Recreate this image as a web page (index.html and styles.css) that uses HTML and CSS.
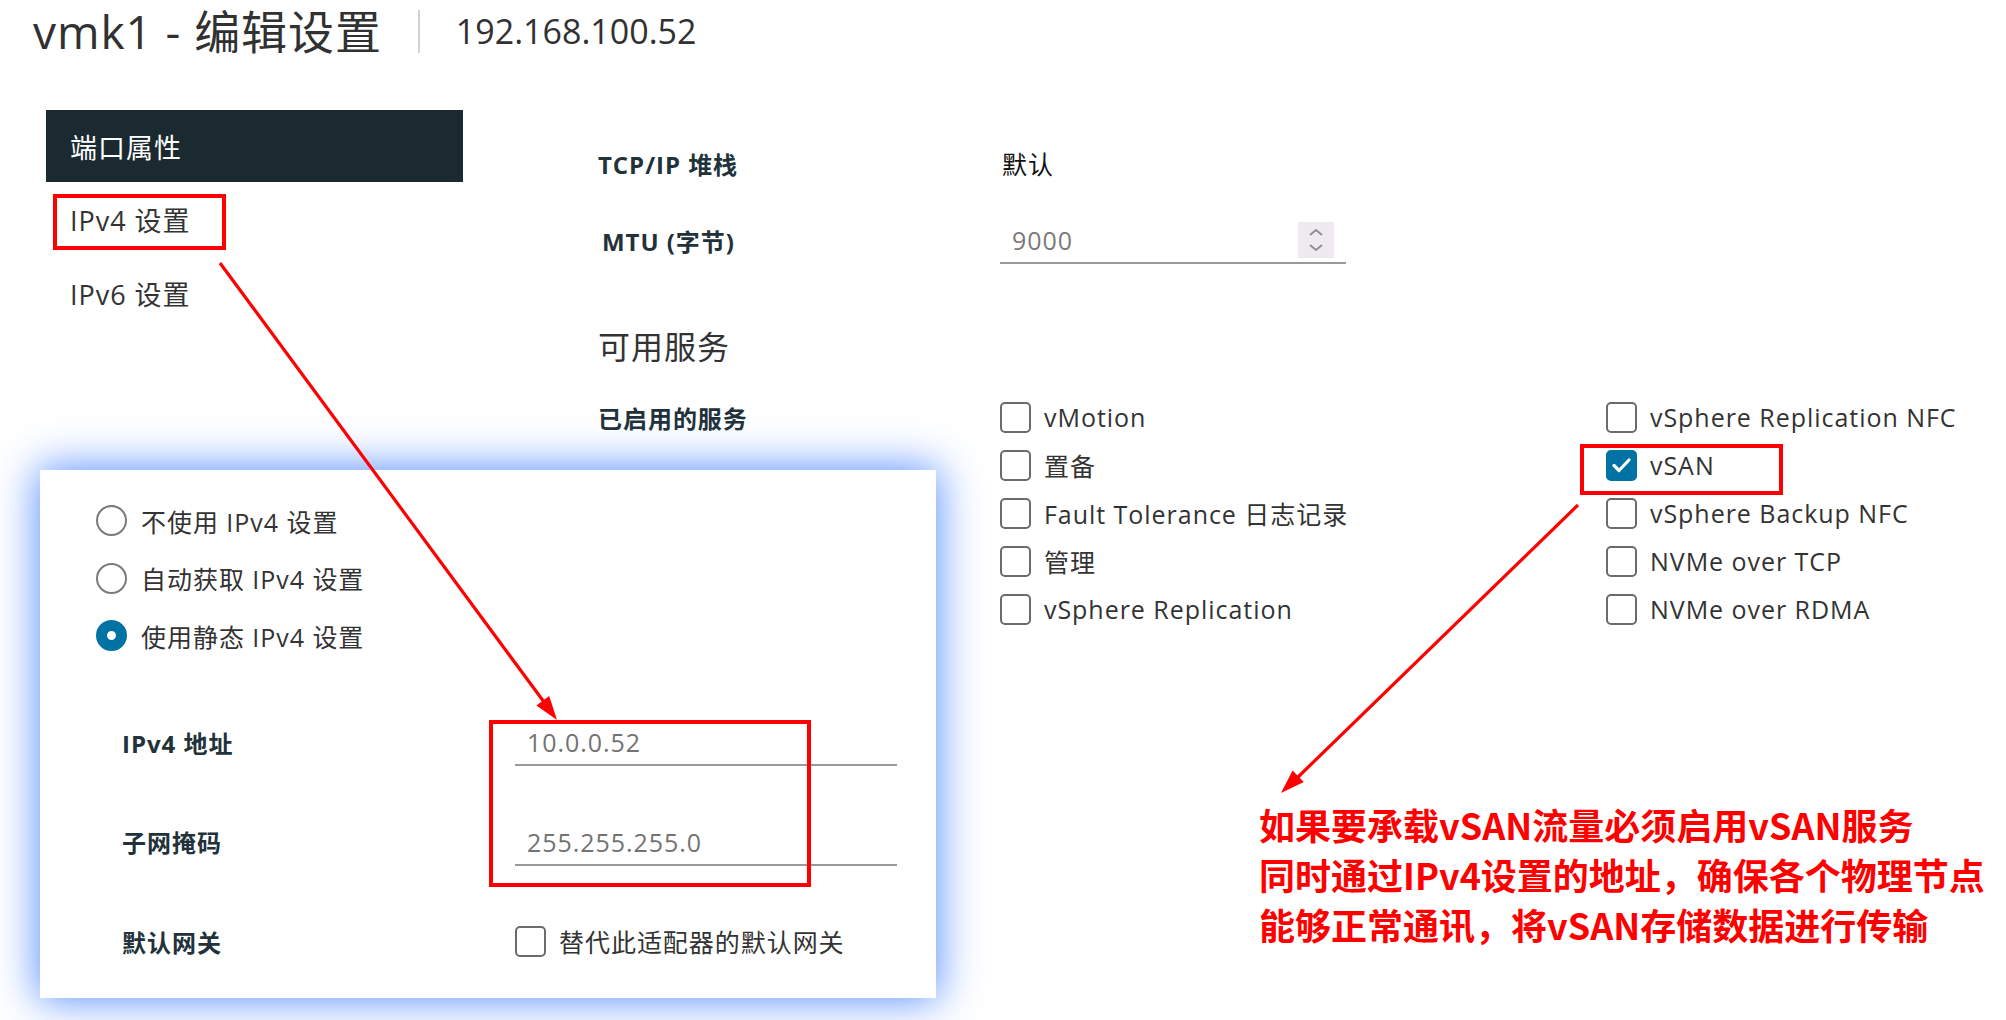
FILE: index.html
```html
<!DOCTYPE html>
<html lang="zh-CN">
<head>
<meta charset="utf-8">
<title>vmk1 - 编辑设置</title>
<link rel="stylesheet" href="styles.css">
</head>
<body>
<div class="page">
  <header class="top">
    <h1 class="title">vmk1 - 编辑设置</h1>
    <span class="sep"></span>
    <span class="ip">192.168.100.52</span>
  </header>

  <div class="main">
    <nav class="nav">
      <div class="nav-head">端口属性</div>
      <div class="nav-item">IPv4 设置</div>
      <div class="nav-item">IPv6 设置</div>
    </nav>

    <section class="form">
      <div class="row row-stack">
        <div class="lbl">TCP/IP 堆栈</div>
        <div class="val">默认</div>
      </div>
      <div class="row row-mtu">
        <div class="lbl lbl-mtu">MTU (字节)</div>
        <div class="num-input">
          <span class="num-val">9000</span>
          <span class="spin">
            <svg width="36" height="36" viewBox="0 0 36 36"><polyline points="12,13 18,8 24,13" fill="none" stroke="#8d8d9c" stroke-width="2"/><polyline points="12,23 18,28 24,23" fill="none" stroke="#8d8d9c" stroke-width="2"/></svg>
          </span>
        </div>
      </div>
      <div class="avail">可用服务</div>
      <div class="services">
        <div class="lbl">已启用的服务</div>
        <div class="check"><span class="box"></span>vMotion</div>
        <div class="check"><span class="box"></span>vSphere Replication NFC</div>

        <div></div>
        <div class="check"><span class="box"></span>置备</div>
        <div class="check"><span class="box checked"><svg width="31" height="31" viewBox="0 0 31 31"><polyline points="8,15.5 13,20.5 23,10" fill="none" stroke="#fff" stroke-width="3.2" stroke-linecap="round" stroke-linejoin="round"/></svg></span>vSAN</div>

        <div></div>
        <div class="check"><span class="box"></span>Fault Tolerance 日志记录</div>
        <div class="check"><span class="box"></span>vSphere Backup NFC</div>

        <div></div>
        <div class="check"><span class="box"></span>管理</div>
        <div class="check"><span class="box"></span>NVMe over TCP</div>

        <div></div>
        <div class="check"><span class="box"></span>vSphere Replication</div>
        <div class="check"><span class="box"></span>NVMe over RDMA</div>
      </div>
    </section>
  </div>

  <div class="callout">
    <div class="radio-row"><span class="radio"></span>不使用 IPv4 设置</div>
    <div class="radio-row"><span class="radio"></span>自动获取 IPv4 设置</div>
    <div class="radio-row"><span class="radio on"></span>使用静态 IPv4 设置</div>
    <div class="fields">
      <div class="field">
        <div class="lbl">IPv4 地址</div>
        <div class="text-input">10.0.0.52</div>
      </div>
      <div class="field">
        <div class="lbl">子网掩码</div>
        <div class="text-input">255.255.255.0</div>
      </div>
      <div class="field">
        <div class="lbl">默认网关</div>
        <div class="check"><span class="box"></span>替代此适配器的默认网关</div>
      </div>
    </div>
  </div>

  <svg class="annot" width="2006" height="1020" viewBox="0 0 2006 1020">
    <rect x="55" y="196" width="169" height="52" fill="none" stroke="#ff0000" stroke-width="4"/>
    <rect x="1582" y="446" width="199" height="47" fill="none" stroke="#ff0000" stroke-width="4"/>
    <rect x="491" y="722" width="318" height="163" fill="none" stroke="#ff0000" stroke-width="4"/>
    <line x1="220" y1="263" x2="544" y2="702" stroke="#ff0000" stroke-width="3.2"/>
    <polygon points="557,720 536.4,705.4 549.2,696" fill="#ff0000"/>
    <line x1="1578" y1="505" x2="1297" y2="778" stroke="#ff0000" stroke-width="3.2"/>
    <polygon points="1281,793 1292.6,770.6 1303.8,782" fill="#ff0000"/>
  </svg>

  <div class="note">如果要承载vSAN流量必须启用vSAN服务<br>同时通过IPv4设置的地址，确保各个物理节点<br>能够正常通讯，将vSAN存储数据进行传输</div>
</div>
</body>
</html>
```

FILE: styles.css
```css
html, body {
  margin: 0;
  padding: 0;
  background: #ffffff;
}

.page {
  position: relative;
  width: 2006px;
  height: 1020px;
  overflow: hidden;
  background: #ffffff;
  font-family: "Open Sans", "Noto Sans CJK SC", sans-serif;
  color: #333333;
  letter-spacing: 0.06em;
}

/* header */
.top {
  display: flex;
  align-items: center;
  height: 56px;
  padding-top: 3px;
  padding-left: 33px;
}

.title {
  margin: 0;
  font-size: 46px;
  font-weight: 400;
  line-height: 46px;
  color: #313131;
  letter-spacing: 0.02em;
}

.sep {
  width: 2px;
  height: 43px;
  background: #d3d3d3;
  margin: 0 36px;
}

.ip {
  font-size: 34px;
  line-height: 40px;
  color: #313131;
  letter-spacing: 0;
}

/* main */
.main {
  display: flex;
  margin-top: 51px;
}

.nav {
  width: 417px;
  margin-left: 46px;
  flex: none;
}

.nav-head {
  height: 72px;
  background: #1b2a31;
  color: #ffffff;
  font-size: 27px;
  display: flex;
  align-items: center;
  padding-left: 24px;
}

.nav-item {
  height: 74px;
  display: flex;
  align-items: center;
  padding-left: 24px;
  font-size: 27px;
  color: #333333;
}

.form {
  margin-left: 135px;
  flex: 1;
}

.row {
  display: grid;
  grid-template-columns: 402px 606px 1fr;
  align-items: center;
}

.row-stack {
  height: 106px;
}

.row-mtu {
  height: 48px;
}

.lbl {
  font-weight: 700;
  font-size: 24px;
  color: #22323a;
}

.lbl-mtu {
  padding-left: 4px;
}

.val {
  font-size: 25px;
  color: #111111;
  padding-left: 2px;
}

.num-input {
  align-self: end;
  width: 346px;
  height: 42px;
  box-sizing: border-box;
  border-bottom: 2px solid #9a9a9a;
  display: flex;
  align-items: flex-start;
  justify-content: space-between;
  padding-left: 12px;
  padding-right: 12px;
  font-size: 25px;
  color: #7a7a7a;
}

.num-val {
  line-height: 36px;
}

.spin {
  width: 36px;
  height: 36px;
  background: #eeeaef;
  display: block;
}

.spin svg {
  display: block;
}

.avail {
  height: 66px;
  margin-top: 48px;
  display: flex;
  align-items: center;
  font-size: 32px;
  color: #333333;
}

.services {
  margin-top: 15px;
  display: grid;
  grid-template-columns: 402px 606px 1fr;
  grid-auto-rows: 48px;
  align-items: center;
}

.check {
  display: flex;
  align-items: center;
  gap: 13px;
  font-size: 25px;
  color: #333333;
  white-space: nowrap;
}

.box {
  width: 31px;
  height: 31px;
  box-sizing: border-box;
  border: 2px solid #6b6b6b;
  border-radius: 5px;
  flex: none;
  display: block;
}

.box.checked {
  background: #0072a3;
  border-color: #0072a3;
  position: relative;
}

.box.checked svg {
  position: absolute;
  left: -2px;
  top: -2px;
}

/* callout */
.callout {
  position: absolute;
  left: 40px;
  top: 470px;
  width: 896px;
  height: 528px;
  box-sizing: border-box;
  background: #ffffff;
  box-shadow: 0 0 40px 2px rgba(70, 130, 255, 0.9);
  padding: 22px 0 0 56px;
}

.radio-row {
  height: 57.5px;
  display: flex;
  align-items: center;
  gap: 14px;
  font-size: 25px;
  color: #333333;
}

.radio {
  width: 31px;
  height: 31px;
  box-sizing: border-box;
  border: 2px solid #7a7a7a;
  border-radius: 50%;
  flex: none;
  display: block;
}

.radio.on {
  border: 11.5px solid #0072a3;
  background: #ffffff;
}

.fields {
  margin-top: 28px;
  margin-left: 26px;
}

.field {
  display: grid;
  grid-template-columns: 393px 382px;
  height: 99.5px;
  align-items: center;
}

.text-input {
  height: 48px;
  box-sizing: border-box;
  border-bottom: 2px solid #9a9a9a;
  display: flex;
  align-items: center;
  padding-left: 12px;
  padding-top: 2px;
  font-size: 25px;
  color: #737373;
}

/* annotations */
.annot {
  position: absolute;
  left: 0;
  top: 0;
  pointer-events: none;
}

.note {
  position: absolute;
  left: 1259px;
  top: 799px;
  color: #ff0000;
  font-family: "Noto Sans CJK SC", sans-serif;
  font-weight: 700;
  font-size: 36px;
  line-height: 50px;
  letter-spacing: 0;
  white-space: nowrap;
}
```
